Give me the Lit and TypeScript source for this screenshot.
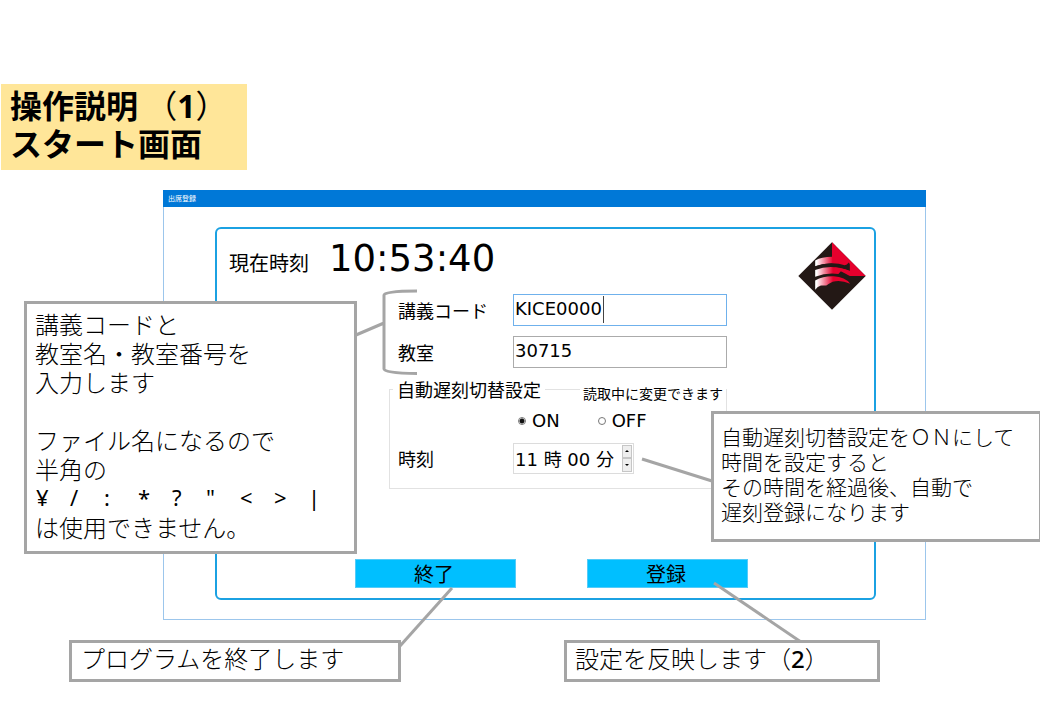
import { LitElement, html, css } from "lit";
import { customElement, state } from "lit/decorators.js";

@customElement("school-mark")
class SchoolMark extends LitElement {
  static styles = css`
    :host { display: block; }
    .mark { display: block; width: 68px; height: 68px; }
  `;
  render() {
    return html`<svg class="mark" viewBox="0 0 202 202" role="img" aria-label="校章">
      <defs>
        <linearGradient id="fade" gradientUnits="userSpaceOnUse" x1="50" y1="0" x2="104" y2="0">
          <stop offset="0.1" stop-color="#fff" />
          <stop offset="1" stop-color="#e6002d" />
        </linearGradient>
      </defs>
      <path d="M101 1 201 101 101 201 1 101Z" fill="#231815" />
      <path d="M101 1 201 101H154L126 86 101 70Z" fill="#e6002d" />
      <path d="M51 55Q70 44 102 44V64Q76 62 51 72Z" fill="url(#fade)" />
      <path d="M51 72Q100 56 139 69L145 67 151 61 154 66V86Q100 66 51 83Z" fill="#231815" />
      <path d="M51 83Q100 64 154 86V94L140 91 128 86 120 95Q86 90 51 103Z" fill="url(#fade)" />
      <path d="M51 114Q76 101 106 102 140 104 155 124 128 112 103 118L92 124 84 129 68 129Q58 132 51 142Z" fill="url(#fade)" />
    </svg>`;
  }
}

@customElement("app-root")
class AppRoot extends LitElement {
  @state() late = true;

  static styles = css`
    :host {
      display: block;
      color: #000;
      background: #fff;
      font-family: "Noto Sans CJK JP", sans-serif;
    }
    * { box-sizing: border-box; }
    .slide { position: relative; min-height: 720px; padding: 84px 0 0; overflow: hidden; }
    .title {
      width: 246px;
      margin: 0 0 20px 1px;
      padding: 1px 9px 9px;
      background: #ffe699;
      font-size: 32px;
      line-height: 38px;
      font-weight: 700;
      white-space: nowrap;
    }
    .paren { font-weight: 400; }
    .latin { font-family: "Noto Sans", sans-serif; }
    span.latin { line-height: 1; }

    .window { margin: 0 114px 0 163px; border: 1px solid #9cc6ec; padding-bottom: 19px; }
    .bar {
      margin: -1px -1px 0;
      padding: 0 5px;
      height: 17px;
      background: #0078d7;
      color: #fff;
      font-size: 7px;
      line-height: 17px;
    }
    .panel {
      margin: 20px 49px 0 51px;
      border: 2px solid #1ba1e2;
      border-radius: 6px;
      padding: 0 8px 10px 12px;
    }
    .head { display: flex; align-items: flex-start; height: 65px; }
    .now { margin-top: 20px; font-size: 20px; line-height: 28px; }
    .clock {
      margin-left: 20px;
      font: 37px/60px "DejaVu Sans", sans-serif;
    }
    .head school-mark { margin: 13px 0 0 auto; }
    .form { width: 338px; margin-left: 160px; font-size: 18px; }
    .row { display: grid; grid-template-columns: 115px 1fr; align-items: center; padding-left: 9px; }
    .row + .row { margin-top: 10px; }
    .row label { line-height: 32px; }
    .field { position: relative; }
    .text {
      display: block;
      width: 100%;
      height: 32px;
      padding: 0 1px 4px;
      border: 1px solid #ababab;
      border-radius: 0;
      outline: none;
      background: #fff;
      color: #000;
      font: 18px "DejaVu Sans", "Noto Sans CJK JP", sans-serif;
    }
    .active { border-color: #6fb1ec; }
    .caret { position: absolute; left: 90px; top: 2px; width: 1px; height: 27px; background: #444; }

    .group {
      position: relative;
      min-width: 0;
      height: 112px;
      margin: 9px 0 0;
      padding: 0;
      border: 1px solid #e2e2e2;
    }
    .group legend { margin-left: 3px; padding: 0 4px; line-height: 24px; }
    .note {
      position: absolute;
      right: 0;
      top: -19px;
      padding: 0 3px;
      background: #fff;
      font-size: 14px;
      line-height: 22px;
      white-space: nowrap;
    }
    .choices { display: flex; gap: 38px; margin-top: 8px; padding-left: 128px; }
    .choice {
      display: flex;
      align-items: center;
      gap: 6px;
      font: 18px/24px "DejaVu Sans", sans-serif;
    }
    .choice input {
      appearance: none;
      width: 8px;
      height: 8px;
      margin: 0;
      border: 1px solid #777;
      border-radius: 50%;
      background: #fff;
    }
    .choice input:checked { background: radial-gradient(circle, #111 0 2px, #fff 3px); }
    .time { margin-top: 9px; padding-left: 8px; }
    .spin { display: flex; width: 121px; height: 31px; border: 1px solid #dcdcdc; padding: 1px; }
    .spin .text { flex: 1; min-width: 0; height: 27px; padding: 0 0 1px; border: 0; }
    .steps { display: flex; flex-direction: column; width: 10px; }
    .step {
      flex: 1;
      display: grid;
      place-items: center;
      padding: 0;
      border: 1px solid #c6c6c6;
      background: #eee;
    }
    .step svg { width: 4px; height: 2px; }
    .actions { display: flex; gap: 71px; margin: 70px 0 0 126px; }
    .action {
      width: 161px;
      height: 29px;
      padding: 0 3px 0 0;
      border: 1px solid #55cbf8;
      border-radius: 0;
      background: #00bfff;
      color: #000;
      font: 20px/27px "Noto Sans CJK JP", sans-serif;
    }

    .links { position: absolute; left: 0; top: 0; width: 1040px; height: 720px; pointer-events: none; }
    .callout {
      position: absolute;
      border: 3px solid #a5a5a5;
      background: #fff;
      font-size: 24px;
      line-height: 29px;
      font-weight: 300;
      white-space: nowrap;
    }
    .callout p { margin: 0; }
    .callout span.latin { font-weight: 500; }
    .codes { left: 24px; top: 301px; width: 333px; padding: 5px 8px 10px; }
    .codes p.gap { margin-top: 29px; }
    .marks { display: grid; grid-template-columns: repeat(9, 34px); padding-left: 1px; font-size: 22px; font-weight: 400; }
    .auto { left: 711px; top: 411px; width: 331px; padding: 10px 7px 15px; font-size: 21px; line-height: 25px; }
    .quit { left: 69px; top: 640px; width: 332px; padding: 0 9px 7px; }
    .apply { left: 564px; top: 640px; width: 316px; padding: 0 8px 7px; }
  `;

  render() {
    return html`
      <main class="slide">
        <h1 class="title">操作説明 <span class="paren">（</span><span class="latin">1</span><span class="paren">）</span><br />スタート画面</h1>
        <section class="window">
          <div class="bar">出席登録</div>
          <form class="panel" @submit=${(e: Event) => e.preventDefault()}>
            <div class="head">
              <span class="now">現在時刻</span>
              <time class="clock">10:53:40</time>
              <school-mark></school-mark>
            </div>
            <div class="form">
              <div class="row">
                <label for="code">講義コード</label>
                <div class="field">
                  <input class="text active" id="code" value="KICE0000" /><span class="caret"></span>
                </div>
              </div>
              <div class="row">
                <label for="room">教室</label>
                <input class="text" id="room" value="30715" />
              </div>
              <fieldset class="group">
                <legend>自動遅刻切替設定</legend>
                <span class="note">読取中に変更できます</span>
                <div class="choices">
                  <label class="choice"><input type="radio" name="late" .checked=${this.late} @change=${() => (this.late = true)} />ON</label>
                  <label class="choice"><input type="radio" name="late" .checked=${!this.late} @change=${() => (this.late = false)} />OFF</label>
                </div>
                <div class="row time">
                  <label for="time">時刻</label>
                  <div class="spin">
                    <input class="text" id="time" value="11 時 00 分" />
                    <div class="steps">
                      <button class="step" type="button" aria-label="増やす"><svg viewBox="0 0 4 2"><path d="M0 2 2 0 4 2Z" /></svg></button>
                      <button class="step" type="button" aria-label="減らす"><svg viewBox="0 0 4 2"><path d="M0 0 2 2 4 0Z" /></svg></button>
                    </div>
                  </div>
                </div>
              </fieldset>
            </div>
            <div class="actions">
              <button class="action" type="button">終了</button>
              <button class="action" type="submit">登録</button>
            </div>
          </form>
        </section>

        <svg class="links" viewBox="0 0 1040 720" fill="none" stroke="#a5a5a5" stroke-width="3" aria-hidden="true">
          <path d="M417 291Q384 291 384 295V369Q384 373 417 373.500M356 335 384 323" />
          <path d="M642 459 712 481" />
          <path d="M452 588 400 646" />
          <path d="M714 583 801 642" />
        </svg>
        <aside class="callout codes">
          <p>講義コードと<br />教室名・教室番号を<br />入力します</p>
          <p class="gap">ファイル名になるので<br />半角の</p>
          <p class="marks latin">${["¥", "/", ":", "*", "?", '"', "<", ">", "|"].map((c) => html`<span>${c}</span>`)}</p>
          <p>は使用できません。</p>
        </aside>
        <aside class="callout auto">
          <p>自動遅刻切替設定をＯＮにして<br />時間を設定すると<br />その時間を経過後、自動で<br />遅刻登録になります</p>
        </aside>
        <aside class="callout quit"><p>プログラムを終了します</p></aside>
        <aside class="callout apply"><p>設定を反映します（<span class="latin">2</span>）</p></aside>
      </main>
    `;
  }
}
